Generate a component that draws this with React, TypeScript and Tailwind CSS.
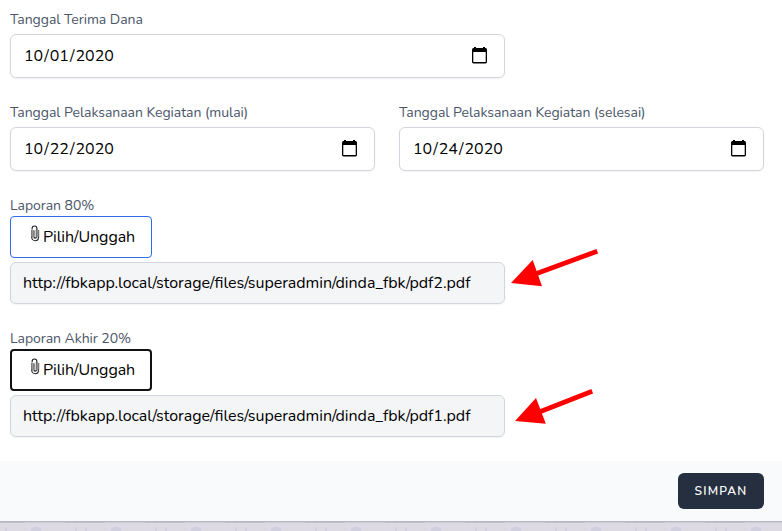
import type { ReactNode } from 'react';

function CalendarIcon() {
  return (
    <svg width="17" height="17" viewBox="0 0 17 17" aria-hidden="true" className="pointer-events-none absolute right-[17px] top-[13px]">
      <path d="M2.5 1H3V0H5V1H12V0H14V1H14.5Q16 1 16 2.5V15Q16 16.4 14.5 16.4H2.5Q1 16.4 1 15V2.5Q1 1 2.5 1ZM2.3 5V15H14.7V5Z" fill="#000" fillRule="evenodd" />
    </svg>
  );
}

function Clip() {
  return (
    <svg width="10" height="17" viewBox="0 0 10 17" fill="none" aria-hidden="true" className="-mt-2 shrink-0">
      <path d="M1.9 5V12.2M8.4 5V12.2M3.9 5.2V11.8M6.5 4.5V11.8" stroke="#777" strokeWidth="1.7" />
      <path d="M2.1 4.6V3.6A2.4 2.6 0 0 1 6.9 3.6V5M1.8 11.8V12.4A3.3 3.3 0 0 0 8.4 12.4V11.8M3.9 11.8A1.3 1.3 0 0 0 6.5 11.8" stroke="#222" strokeWidth="1.1" />
    </svg>
  );
}

function Label({ children }: { children: ReactNode }) {
  return <div className="relative top-px h-5 whitespace-nowrap text-sm leading-5 tracking-[-0.04px] text-[#4a5568]">{children}</div>;
}

function DateInput({ value }: { value: string }) {
  return (
    <div className="relative mt-[5px]">
      <input
        type="date"
        defaultValue={value}
        className="block h-11 w-full rounded-md border border-[#d2d6dc] bg-white px-3 py-2 text-black shadow-xs [&::-webkit-calendar-picker-indicator]:opacity-0"
      />
      <CalendarIcon />
    </div>
  );
}

function FileField({ file, focused }: { file: string; focused?: boolean }) {
  return (
    <>
      <button className={`mt-px flex h-[42px] w-[142px] items-center rounded bg-white text-black ${focused ? 'border-2 border-[#101114] pl-[18px]' : 'border border-[#2f6cec] pl-[19px]'}`}>
        <Clip />
        <span className="ml-[3px] whitespace-nowrap tracking-[-0.07px]">Pilih/Unggah</span>
      </button>
      <div className="mt-1 flex h-[42px] w-[495px] items-center rounded-md border border-[#d2d6dc] bg-[#f4f5f7] pl-3 text-black shadow-xs">
        <span className="whitespace-nowrap tracking-[-0.025px] [font-feature-settings:'liga']">{file}</span>
      </div>
    </>
  );
}

function Arrow({ place, shaft, head }: { place: string; shaft: string; head: string }) {
  return (
    <svg width="88" height="40" viewBox="0 0 88 40" className={`absolute ${place}`} aria-hidden="true">
      <path d={shaft} stroke="#f00" strokeWidth="4.8" />
      <path d={head} fill="#f00" />
    </svg>
  );
}

function PatternStrip() {
  return (
    <svg width="782" height="10" className="block" aria-hidden="true">
      <defs>
        <pattern id="tile" width="80" height="10" patternUnits="userSpaceOnUse">
          <rect width="80" height="10" fill="#dddae4" />
          <rect width="80" height="2" fill="#cdcbd5" />
          <path d="M0 0H25V2H0ZM65 0H80V2H65Z" fill="#bfc0ce" />
          <circle cx="36" cy="11" r="5.5" fill="#cfcfde" />
          <path d="M5 10L5.6 6H6.4L7 10ZM75 10L75.6 6H76.4L77 10Z" fill="#cfcfde" />
        </pattern>
      </defs>
      <rect width="782" height="10" fill="url(#tile)" />
      <rect width="782" height="1" fill="#b5b7c2" />
    </svg>
  );
}

export default function App() {
  return (
    <main className="relative h-[531px] w-[782px] overflow-hidden bg-white font-[Nunito,Lato,sans-serif] text-base text-[#161e2e]">
      <form className="flex h-[461px] flex-col px-[10px] pt-[9px]">
        <div className="w-[495px]">
          <Label>Tanggal Terima Dana</Label>
          <DateInput value="2020-10-01" />
        </div>
        <div className="mt-6 flex gap-6">
          <div className="w-[365px]">
            <Label>Tanggal Pelaksanaan Kegiatan (mulai)</Label>
            <DateInput value="2020-10-22" />
          </div>
          <div className="w-[365px]">
            <Label>Tanggal Pelaksanaan Kegiatan (selesai)</Label>
            <DateInput value="2020-10-24" />
          </div>
        </div>
        <div className="mt-6">
          <Label>Laporan 80%</Label>
          <FileField file="http://fbkapp.local/storage/files/superadmin/dinda_fbk/pdf2.pdf" />
        </div>
        <div className="mt-6">
          <Label>Laporan Akhir 20%</Label>
          <FileField file="http://fbkapp.local/storage/files/superadmin/dinda_fbk/pdf1.pdf" focused />
        </div>
      </form>
      <footer className="flex h-[60px] items-center justify-end bg-[#f9fafb] pr-[18px]">
        <button className="h-9 w-[86px] rounded-md bg-[#252f3f] text-xs font-semibold tracking-[1.2px] text-white">SIMPAN</button>
      </footer>
      <PatternStrip />
      <Arrow place="left-[511px] top-[248px]" shaft="M86.3 3.2L25 25.7" head="M0 35L21.7 12L31 38.2Z" />
      <Arrow place="left-[515px] top-[388px]" shaft="M77.2 3.2L23 24.5" head="M0 33L21 10L30.8 35.8Z" />
    </main>
  );
}
